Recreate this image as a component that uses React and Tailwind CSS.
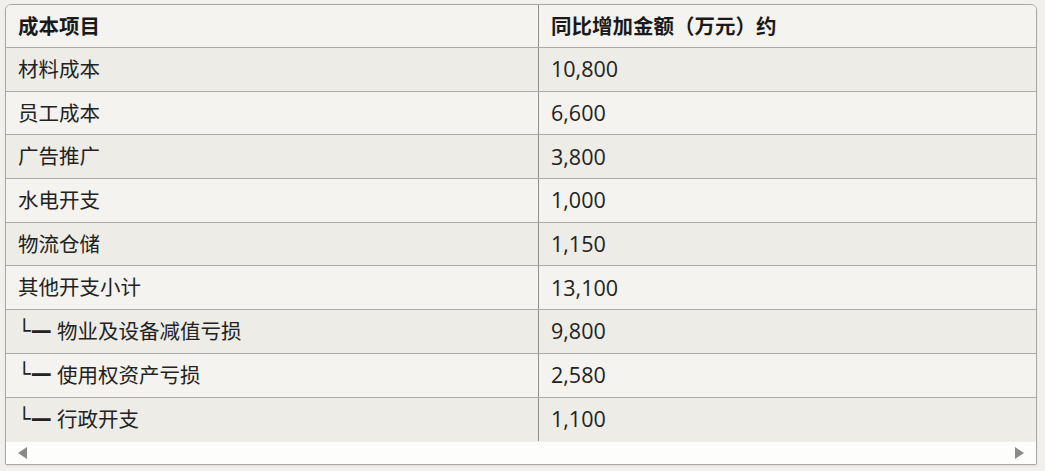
const rows = [
  ['材料成本', '10,800'],
  ['员工成本', '6,600'],
  ['广告推广', '3,800'],
  ['水电开支', '1,000'],
  ['物流仓储', '1,150'],
  ['其他开支小计', '13,100'],
  ['物业及设备减值亏损', '9,800', true],
  ['使用权资产亏损', '2,580', true],
  ['行政开支', '1,100', true],
];

const font = { fontFamily: '"Open Sans", "Noto Sans CJK SC", sans-serif' };

export default function App() {
  return (
    <div className="w-[1045px] h-[471px] bg-[#f1f0ec] pt-[4px] pl-[5px]" style={font}>
      <div className="w-[1032px] rounded-t-[6px] rounded-b-[2px] border border-[#a9a8a3] overflow-hidden bg-[#f4f3ef] shadow-[0_1px_2px_rgba(0,0,0,0.08)]">
        <div className="flex h-[43px] border-b border-[#acaba6] bg-[#f4f3ef] text-[20.5px] font-bold text-[#1a1a1a]">
          <div className="w-[533px] border-r border-[#8f8e8a] flex items-center pl-[12px]">成本项目</div>
          <div className="flex-1 flex items-center pl-[12px]">同比增加金额（万元）约</div>
        </div>
        {rows.map(([name, val, child], i) => (
          <div
            key={name}
            className={
              'flex h-[43.7px] text-[20.5px] text-[#222] ' +
              (i < rows.length - 1 ? 'border-b border-[#acaba6] ' : '') +
              (i % 2 === 0 ? 'bg-[#edece7]' : 'bg-[#f4f3ef]')
            }
          >
            <div className="w-[533px] border-r border-[#8f8e8a] flex items-center pl-[12px] whitespace-pre">
              {child && (
                <span className="text-[21px] font-bold text-[#222]" style={{ fontFamily: '"DejaVu Sans", sans-serif' }}>
                  {'└—'}
                </span>
              )}
              {child ? ' ' + name : name}
            </div>
            <div className="flex-1 flex items-center pl-[12px] text-[21.5px] font-medium">{val}</div>
          </div>
        ))}
        <div className="h-[23px] bg-[#fdfdfc] border-t border-[#f0efeb] flex items-center justify-between px-[12px]">
          <svg width="10" height="12" viewBox="0 0 10 12">
            <path d="M9 0 L0 6 L9 12 Z" fill="#8a8a8a" />
          </svg>
          <svg width="10" height="12" viewBox="0 0 10 12">
            <path d="M1 0 L10 6 L1 12 Z" fill="#8a8a8a" />
          </svg>
        </div>
      </div>
    </div>
  );
}
